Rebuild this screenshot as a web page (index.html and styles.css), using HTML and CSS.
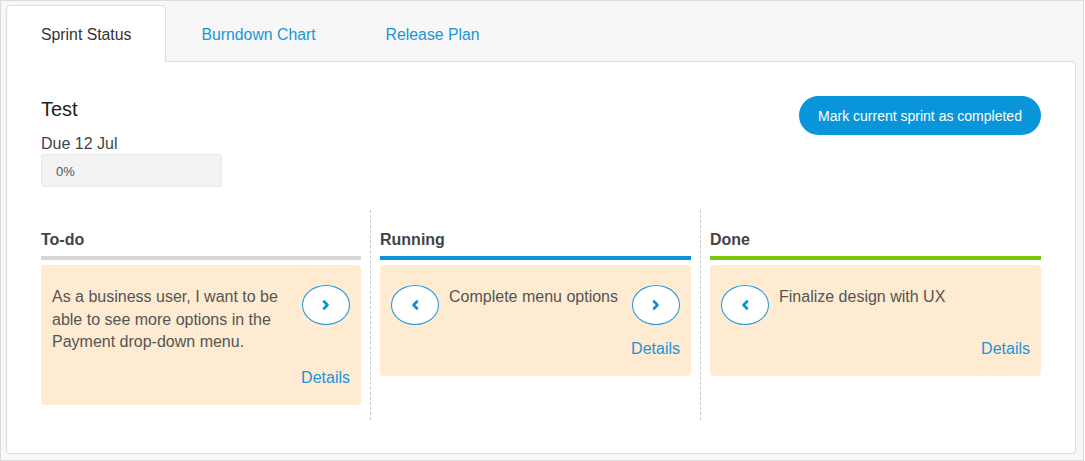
FILE: index.html
```html
<!DOCTYPE html>
<html>
<head>
<meta charset="utf-8">
<link rel="stylesheet" href="styles.css">
</head>
<body>
<div class="frame">
  <div class="tabs">
    <div class="tab active">Sprint Status</div>
    <div class="tab">Burndown Chart</div>
    <div class="tab">Release Plan</div>
  </div>
  <div class="panel">
    <div class="head">
      <div class="info">
        <div class="title">Test</div>
        <div class="due">Due 12 Jul</div>
        <div class="progress">0%</div>
      </div>
      <button class="complete">Mark current sprint as completed</button>
    </div>
    <div class="board">
      <div class="col col-todo">
        <div class="col-title gray">To-do</div>
        <div class="card">
          <div class="card-row">
            <div class="card-text">As a business user, I want to be able to see more options in the Payment drop-down menu.</div>
            <button class="arrow"><svg width="10" height="12" viewBox="0 0 10 12"><path d="M3 2.5 L6.5 6 L3 9.5" fill="none" stroke="#0a8fd6" stroke-width="2.6" stroke-linecap="round" stroke-linejoin="round"/></svg></button>
          </div>
          <div class="details">Details</div>
        </div>
      </div>
      <div class="col col-running">
        <div class="col-title blue">Running</div>
        <div class="card">
          <div class="card-row">
            <button class="arrow"><svg width="10" height="12" viewBox="0 0 10 12"><path d="M7 2.5 L3.5 6 L7 9.5" fill="none" stroke="#0a8fd6" stroke-width="2.6" stroke-linecap="round" stroke-linejoin="round"/></svg></button>
            <div class="card-text">Complete menu options</div>
            <button class="arrow"><svg width="10" height="12" viewBox="0 0 10 12"><path d="M3 2.5 L6.5 6 L3 9.5" fill="none" stroke="#0a8fd6" stroke-width="2.6" stroke-linecap="round" stroke-linejoin="round"/></svg></button>
          </div>
          <div class="details">Details</div>
        </div>
      </div>
      <div class="col col-done">
        <div class="col-title green">Done</div>
        <div class="card">
          <div class="card-row">
            <button class="arrow"><svg width="10" height="12" viewBox="0 0 10 12"><path d="M7 2.5 L3.5 6 L7 9.5" fill="none" stroke="#0a8fd6" stroke-width="2.6" stroke-linecap="round" stroke-linejoin="round"/></svg></button>
            <div class="card-text">Finalize design with UX</div>
          </div>
          <div class="details">Details</div>
        </div>
      </div>
    </div>
  </div>
</div>
</body>
</html>
```

FILE: styles.css
```css
* { box-sizing: border-box; }
html, body { margin: 0; padding: 0; }
body {
  font-family: "Liberation Sans", Arial, sans-serif;
  color: #333;
  background: #fff;
}
.frame {
  width: 1084px;
  height: 461px;
  background: #f7f7f7;
  border: 1px solid #dcdcdc;
  padding: 4px 7px 6px 5px;
}
.tabs {
  display: flex;
  height: 57px;
  position: relative;
  z-index: 1;
}
.tab {
  padding: 0 34px;
  font-size: 15.8px;
  line-height: 58px;
  color: #1a95d8;
  border: 1px solid transparent;
  border-bottom: none;
}
.tab.active {
  background: #fff;
  color: #333;
  border-color: #dcdcdc;
  border-radius: 4px 4px 0 0;
  height: 57px;
}
.panel {
  background: #fff;
  border: 1px solid #dcdcdc;
  border-radius: 0 4px 4px 4px;
  margin-top: -1px;
  padding: 34px 34px 32px 34px;
  height: 393px;
}
.head {
  display: flex;
  justify-content: space-between;
  align-items: flex-start;
}
.title {
  font-size: 20px;
  line-height: 26px;
  color: #222;
}
.due {
  font-size: 16px;
  line-height: 20px;
  margin-top: 12px;
  color: #444;
}
.progress {
  margin-top: 0;
  width: 181px;
  height: 33px;
  background: #f3f3f3;
  border: 1px solid #e9e9e9;
  border-radius: 3px;
  font-size: 13px;
  line-height: 33px;
  padding-left: 14px;
  color: #555;
}
.complete {
  font-family: inherit;
  background: #0895d9;
  color: #fff;
  border: none;
  border-radius: 20px;
  height: 39px;
  width: 242px;
  font-size: 14px;
  padding: 0;
  margin-top: 0;
}
.board {
  display: flex;
  margin-top: 23px;
  height: 210px;
}
.col {
  padding: 19px 9px 16px 9px;
}
.col-todo {
  width: 330px;
  padding-left: 0;
  border-right: 1px dashed #c8c8c8;
}
.col-running {
  width: 330px;
  border-right: 1px dashed #c8c8c8;
}
.col-done {
  width: 340px;
  padding-right: 0;
}
.col-title {
  font-size: 16px;
  font-weight: bold;
  line-height: 22px;
  color: #444;
  padding-bottom: 5px;
  border-bottom: 4px solid #d6d6d6;
  margin-bottom: 5px;
}
.col-title.blue { border-bottom-color: #0994d9; }
.col-title.green { border-bottom-color: #77c806; }
.card {
  background: #feebd2;
  border-radius: 4px;
  padding: 20px 11px 16px 11px;
}
.card-row {
  display: flex;
  align-items: flex-start;
  gap: 10px;
}
.card-text {
  flex: 1;
  font-size: 16px;
  line-height: 22.5px;
  color: #555;
  padding-top: 1px;
}
.arrow {
  flex: none;
  width: 48px;
  height: 40px;
  border-radius: 50%;
  background: #fff;
  border: 1px solid #1b96d9;
  padding: 0;
  display: flex;
  align-items: center;
  justify-content: center;
}
.arrow svg { display: block; }
.details {
  margin-top: 13px;
  text-align: right;
  font-size: 16px;
  line-height: 22px;
  color: #1a95d8;
}
```
